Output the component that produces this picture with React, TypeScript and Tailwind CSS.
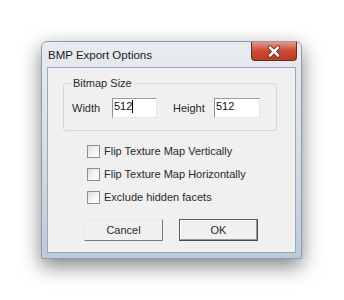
import React from "react";

const font = { fontFamily: '"Liberation Sans", Arial, sans-serif' };

function Checkbox({ label }: { label: string }) {
  return (
    <div className="flex items-center h-[13px]">
      <div className="w-[13px] h-[13px] border border-[#8f8f8f] bg-gradient-to-br from-[#dcdcdc] via-[#f4f4f4] to-white" />
      <span className="ml-[4px] text-[11px] leading-[13px] text-[#2a2a2a]">{label}</span>
    </div>
  );
}

function TextBox({ value, caret, width }: { value: string; caret?: boolean; width: string }) {
  return (
    <div
      className={`${width} h-[20px] bg-white border border-[#e2e6ea] border-t-[#9a9ea4] border-l-[#8a8e94] flex items-start pl-[1px] pt-[1px] text-[11px] leading-[13px] text-[#111]`}
    >
      <span>{value}</span>
      {caret && <span className="w-[1px] h-[13px] bg-black" />}
    </div>
  );
}

export default function App() {
  return (
    <div className="w-[344px] h-[300px] bg-white pl-[41px] pt-[41px]" style={font}>
      <div className="w-[261px] h-[218px] rounded-t-[6px] border border-[#8e9cab] bg-gradient-to-b from-[#e8ecf1] via-[#d6dee7] to-[#bccad8] shadow-[0_7px_20px_rgba(0,0,0,0.5)] flex flex-col">
        {/* title bar */}
        <div className="h-[25px] flex items-start justify-between">
          <span className="pl-[6px] pt-[6px] text-[11.5px] leading-[14px] text-[#1a1a1a]">BMP Export Options</span>
          <div className="mr-[4px] w-[46px] h-[19px] rounded-b-[4px] border border-t-0 border-[#6e2a1e] bg-gradient-to-b from-[#e7968a] via-[#c94a32] to-[#b93e25] flex items-center justify-center">
            <svg width="16" height="13" viewBox="0 0 16 13">
              <path d="M4 2.5 L12 10.5 M12 2.5 L4 10.5" stroke="#5a2318" strokeWidth="4.2" strokeLinecap="round" />
              <path d="M4 2.5 L12 10.5 M12 2.5 L4 10.5" stroke="#ffffff" strokeWidth="2.6" strokeLinecap="round" />
            </svg>
          </div>
        </div>
        {/* client */}
        <div className="mx-[5px] h-[186px] border border-[#9aa8b8] bg-[#f0f0f0] flex flex-col">
          {/* group box */}
          <div className="relative ml-[15px] mt-[15px] w-[214px] h-[48px] border border-[#d2d8dd] rounded-[3px] flex items-start pl-[8px] pt-[14px]">
            <span className="absolute left-[7px] top-[-8px] px-[2px] bg-[#f0f0f0] text-[11px] leading-[14px] text-[#2a2a2a]">
              Bitmap Size
            </span>
            <span className="w-[40px] pt-[4px] text-[11px] leading-[13px] text-[#2a2a2a]">Width</span>
            <TextBox value="512" caret width="w-[45px]" />
            <span className="ml-[16px] w-[41px] pt-[4px] text-[11px] leading-[13px] text-[#2a2a2a]">Height</span>
            <TextBox value="512" width="w-[46px]" />
          </div>
          {/* checkboxes */}
          <div className="ml-[39px] mt-[14px] flex flex-col gap-[10px]">
            <Checkbox label="Flip Texture Map Vertically" />
            <Checkbox label="Flip Texture Map Horizontally" />
            <Checkbox label="Exclude hidden facets" />
          </div>
          {/* buttons */}
          <div className="ml-[36px] mt-[15px] flex gap-[16px]">
            <button className="w-[79px] h-[22px] bg-[#f0f0f0] border border-[#e8e8e8] border-r-[#7a7a7a] border-b-[#7a7a7a] text-[11px] text-[#2a2a2a]">
              Cancel
            </button>
            <button className="w-[79px] h-[22px] bg-[#f0f0f0] border border-[#5e5e5e] border-r-[#4a4a4a] border-b-[#4a4a4a] shadow-[inset_-1px_-1px_0_#9a9a9a,inset_1px_1px_0_#ffffff] text-[11px] text-[#2a2a2a]">
              OK
            </button>
          </div>
        </div>
      </div>
    </div>
  );
}
